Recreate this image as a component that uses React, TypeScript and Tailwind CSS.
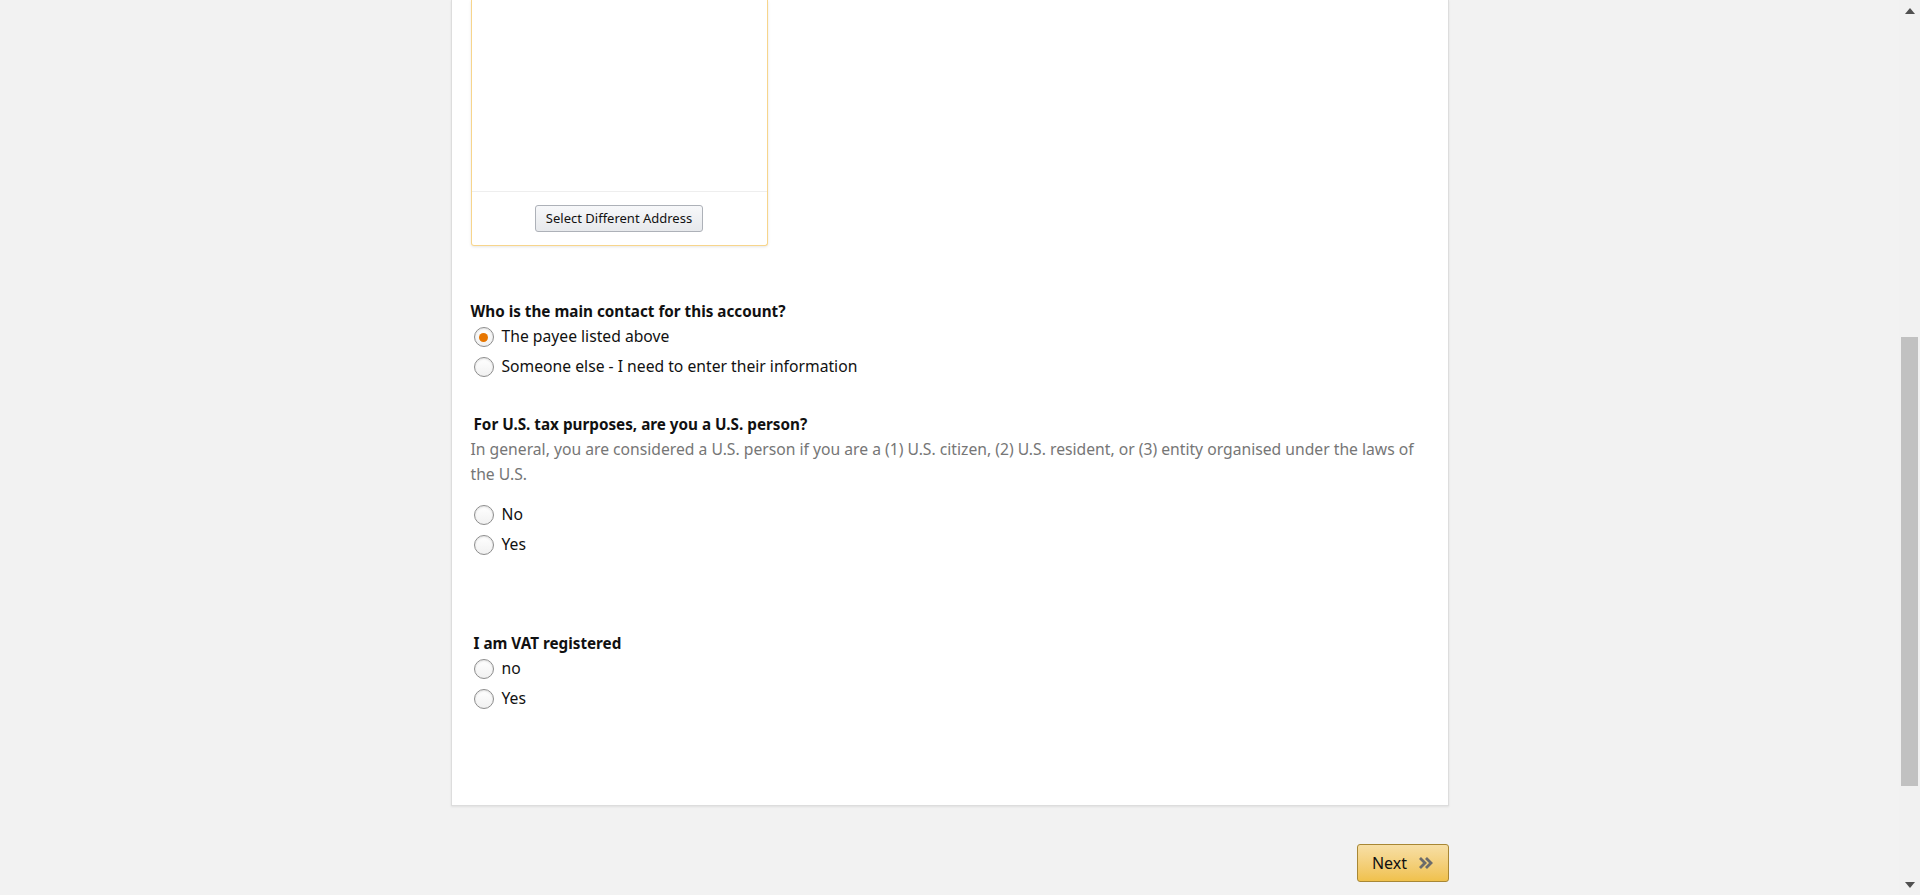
import React, { useState } from 'react';

const FONT = { fontFamily: '"Noto Sans", Arial, sans-serif' };

type RadioProps = { label: string; checked: boolean; onSelect: () => void };

const Radio: React.FC<RadioProps> = ({ label, checked, onSelect }) => (
  <label onClick={onSelect} className="flex h-[30px] cursor-pointer items-center pl-[3px]">
    <span className="flex h-[20px] w-[20px] items-center justify-center rounded-full border border-[#8d8d8d] bg-gradient-to-b from-[#ffffff] to-[#f1f1f1] shadow-[inset_0_1px_2px_rgba(0,0,0,0.12)]">
      {checked && <span className="h-[9px] w-[9px] rounded-full bg-[#e77600]" />}
    </span>
    <span className="ml-[8px] text-[15.7px] text-[#111]">{label}</span>
  </label>
);

const Scrollbar: React.FC = () => (
  <div className="flex h-[895px] w-[21px] shrink-0 flex-col items-center bg-[#f1f1f1]">
    <div className="flex h-[21px] items-center justify-center">
      <svg width="10" height="6" viewBox="0 0 10 6">
        <path d="M0 6 L5 0 L10 6 Z" fill="#505050" />
      </svg>
    </div>
    <div className="h-[316px]" />
    <div className="h-[449px] w-[17px] bg-[#c1c1c1]" />
    <div className="flex-1" />
    <div className="flex h-[21px] items-center justify-center">
      <svg width="10" height="6" viewBox="0 0 10 6">
        <path d="M0 0 L10 0 L5 6 Z" fill="#505050" />
      </svg>
    </div>
  </div>
);

export default function App() {
  const [contact, setContact] = useState('payee');
  const [usPerson, setUsPerson] = useState('');
  const [vat, setVat] = useState('');

  return (
    <div className="flex h-[895px] w-full overflow-hidden bg-[#f2f2f2]" style={FONT}>
      <div className="flex-1">
        <div className="mx-auto w-[998px]">
          <div className="border-x border-b border-[#dddddd] bg-white px-[19px] pb-[91px] shadow-[0_1px_2px_rgba(0,0,0,0.08)]">
            <div className="w-[297px] rounded-b-[3px] border-x border-b border-[#f7d58c] shadow-[0_1px_3px_rgba(0,0,0,0.1)]">
              <div className="h-[192px] border-b border-[#eeeeee]" />
              <div className="flex h-[53px] items-center justify-center">
                <button className="h-[27px] rounded-[3px] border border-[#adb1b8] bg-gradient-to-b from-[#f7f8fa] to-[#e7e9ec] px-[10px] text-[13px] text-[#111]">
                  Select Different Address
                </button>
              </div>
            </div>

            <h3 className="mt-[55px] text-[15.25px] font-bold leading-[20px] text-[#111]">
              Who is the main contact for this account?
            </h3>
            <div className="mt-[1px]">
              <Radio label="The payee listed above" checked={contact === 'payee'} onSelect={() => setContact('payee')} />
              <Radio
                label="Someone else - I need to enter their information"
                checked={contact === 'other'}
                onSelect={() => setContact('other')}
              />
            </div>

            <h3 className="mt-[32px] pl-[3px] text-[15.25px] font-bold leading-[20px] text-[#111]">
              For U.S. tax purposes, are you a U.S. person?
            </h3>
            <p className="mt-[3px] w-[960px] text-[15.7px] leading-[24.5px] text-[#767676]">
              In general, you are considered a U.S. person if you are a (1) U.S. citizen, (2) U.S. resident, or (3)
              entity organised under the laws of the U.S.
            </p>
            <div className="mt-[14px]">
              <Radio label="No" checked={usPerson === 'no'} onSelect={() => setUsPerson('no')} />
              <Radio label="Yes" checked={usPerson === 'yes'} onSelect={() => setUsPerson('yes')} />
            </div>

            <h3 className="mt-[73px] pl-[3px] text-[15.25px] font-bold leading-[20px] text-[#111]">
              I am VAT registered
            </h3>
            <div className="mt-[1px]">
              <Radio label="no" checked={vat === 'no'} onSelect={() => setVat('no')} />
              <Radio label="Yes" checked={vat === 'yes'} onSelect={() => setVat('yes')} />
            </div>
          </div>

          <div className="mt-[38px] flex justify-end">
            <button className="flex h-[38px] w-[92px] items-center justify-center gap-[12px] rounded-[3px] border border-[#a88734] bg-gradient-to-b from-[#f7dfa5] to-[#f0c14b] text-[16px] text-[#111]">
              <span>Next</span>
              <svg width="14" height="12" viewBox="0 0 14 12">
                <path d="M1 1 L6 6 L1 11 M7 1 L12 6 L7 11" fill="none" stroke="#6b6b6b" strokeWidth="2.8" />
              </svg>
            </button>
          </div>
        </div>
      </div>
      <Scrollbar />
    </div>
  );
}
